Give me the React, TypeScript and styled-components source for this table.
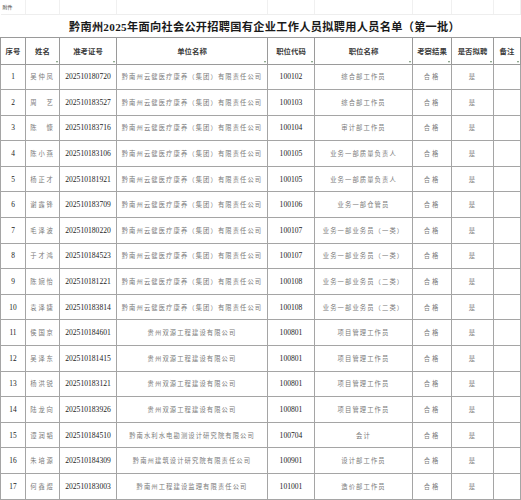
import React from 'react';
import styled, { createGlobalStyle } from 'styled-components';

const GlobalStyle = createGlobalStyle`
  html, body {
    margin: 0;
    padding: 0;
    background: #fff;
  }
  body {
    font-family: "Liberation Serif", "Noto Sans CJK SC", serif;
  }
`;

const widths = [25, 34, 57, 151, 47, 98, 39, 42, 27];

const Sheet = styled.div`
  width: 521px;
  height: 500px;
  overflow: hidden;
  background: #fff;
`;

const Table = styled.table`
  width: 520px;
  table-layout: fixed;
  border-collapse: collapse;
`;

const NoteRow = styled.tr`
  height: 14px;
`;

const NoteCell = styled.td`
  padding: 0 0 0 2px;
  border-right: 1px solid #f0f0f0;
  border-bottom: 1px solid #eeeeee;
  font-family: "Noto Sans CJK SC", sans-serif;
  font-size: 5px;
  color: #444;
  vertical-align: middle;
  white-space: nowrap;
`;

const TitleRow = styled.tr`
  height: 23px;
`;

const TitleCell = styled.td`
  padding: 0 0 0 8px;
  text-align: center;
  vertical-align: middle;
  font-family: "Liberation Serif", "Noto Sans CJK SC", serif;
  font-size: 11.2px;
  font-weight: 700;
  letter-spacing: 0.3px;
  color: #1a1a1a;
  white-space: nowrap;
  border-bottom: 1px solid #9a9a9a;
`;

const HeadRow = styled.tr`
  height: 27px;
`;

const HeadCell = styled.th`
  position: relative;
  padding: 0;
  border: 1px solid #9a9a9a;
  font-family: "Noto Sans CJK SC", sans-serif;
  font-size: 7.4px;
  font-weight: 700;
  color: #3a3a3a;
  text-align: center;
  vertical-align: middle;
  white-space: nowrap;
`;

const FilterMark = styled.span`
  position: absolute;
  right: 1px;
  bottom: 1px;
  width: 0;
  height: 0;
  border-left: 1.5px solid transparent;
  border-right: 1.5px solid transparent;
  border-top: 2px solid #6d8f6d;
`;

const BodyRow = styled.tr`
  height: 25.6px;
`;

const Cell = styled.td<{ kind: 'num' | 'cjk' | 'name' | 'code' }>`
  padding: 0;
  border: 1px solid #a5a5a5;
  text-align: center;
  vertical-align: middle;
  white-space: nowrap;
  overflow: hidden;
  font-family: ${(p) =>
    p.kind === 'num' || p.kind === 'code'
      ? '"Liberation Serif", serif'
      : '"Noto Sans CJK SC", sans-serif'};
  font-size: ${(p) => (p.kind === 'code' ? '7.6px' : p.kind === 'num' ? '7.4px' : '6.3px')};
  letter-spacing: ${(p) => (p.kind === 'name' ? '1.9px' : p.kind === 'cjk' ? '1.1px' : '0')};
  color: ${(p) => (p.kind === 'num' || p.kind === 'code' ? '#222' : '#7a7a7a')};
`;

const YUN = '黔南州云健医疗康养（集团）有限责任公司';
const SHY = '贵州双源工程建设有限公司';

const rows = [
  ['吴仲凤', '202510180720', YUN, '100102', '综合部工作员'],
  ['周　艺', '202510183527', YUN, '100103', '综合部工作员'],
  ['陈　慷', '202510183716', YUN, '100104', '审计部工作员'],
  ['陈小燕', '202510183106', YUN, '100105', '业务一部质量负责人'],
  ['杨正才', '202510181921', YUN, '100105', '业务一部质量负责人'],
  ['谢露锋', '202510183709', YUN, '100106', '业务一部仓管员'],
  ['毛泽波', '202510180220', YUN, '100107', '业务一部业务员（一类）'],
  ['于才鸿', '202510184523', YUN, '100107', '业务一部业务员（一类）'],
  ['陈婉怡', '202510181221', YUN, '100108', '业务一部业务员（二类）'],
  ['袁泽婕', '202510183814', YUN, '100108', '业务一部业务员（二类）'],
  ['侯国京', '202510184601', SHY, '100801', '项目管理工作员'],
  ['吴泽东', '202510181415', SHY, '100801', '项目管理工作员'],
  ['杨洪锐', '202510183121', SHY, '100801', '项目管理工作员'],
  ['陆龙向', '202510183926', SHY, '100801', '项目管理工作员'],
  ['谭润韬', '202510184510', '黔南水利水电勘测设计研究院有限公司', '100704', '会计'],
  ['朱培源', '202510184309', '黔南州建筑设计研究院有限责任公司', '100901', '设计部工作员'],
  ['何鑫煜', '202510183003', '黔南州工程建设监理有限责任公司', '101001', '造价部工作员'],
];

const headers = ['序号', '姓名', '准考证号', '单位名称', '职位代码', '职位名称', '考察结果', '是否拟聘', '备注'];

export default function App() {
  return (
    <>
      <GlobalStyle />
      <Sheet>
        <Table>
          <colgroup>
            {widths.map((w, i) => (
              <col key={i} style={{ width: w }} />
            ))}
          </colgroup>
          <tbody>
            <NoteRow>
              {widths.map((_, i) => (
                <NoteCell key={i}>{i === 0 ? '附件' : ''}</NoteCell>
              ))}
            </NoteRow>
            <TitleRow>
              <TitleCell colSpan={9}>黔南州2025年面向社会公开招聘国有企业工作人员拟聘用人员名单（第一批）</TitleCell>
            </TitleRow>
            <HeadRow>
              {headers.map((h, i) => (
                <HeadCell key={h}>
                  {h}
                  {i > 0 && <FilterMark />}
                </HeadCell>
              ))}
            </HeadRow>
            {rows.map((r, i) => (
              <BodyRow key={i}>
                <Cell kind="num">{i + 1}</Cell>
                <Cell kind="name">{r[0]}</Cell>
                <Cell kind="code">{r[1]}</Cell>
                <Cell kind="cjk">{r[2]}</Cell>
                <Cell kind="code">{r[3]}</Cell>
                <Cell kind="cjk">{r[4]}</Cell>
                <Cell kind="name">合格</Cell>
                <Cell kind="cjk">是</Cell>
                <Cell kind="cjk"></Cell>
              </BodyRow>
            ))}
          </tbody>
        </Table>
      </Sheet>
    </>
  );
}
